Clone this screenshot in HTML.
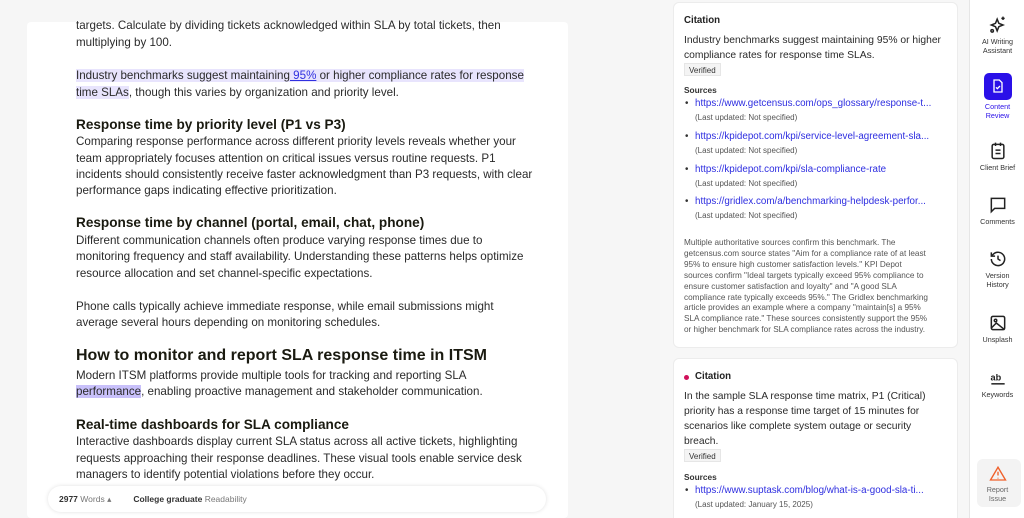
<!DOCTYPE html>
<html><head><meta charset="utf-8"><style>
*{margin:0;padding:0;box-sizing:border-box}
html,body{width:1024px;height:518px;overflow:hidden}
body{background:#f6f6f6;font-family:"Liberation Sans",Arial,sans-serif;position:relative;color:#222}
.ed{position:absolute;left:27px;top:22px;width:541px;height:496px;background:#fff;border-radius:4px}
.t{position:absolute;left:76px;font-size:11.6px;color:#2a2a2a;white-space:nowrap;line-height:17px}
.h3{position:absolute;left:76px;font-size:13.6px;font-weight:bold;color:#1a1a10;white-space:nowrap}
.h2{position:absolute;left:76px;font-size:16px;font-weight:bold;color:#1a1a10;white-space:nowrap}
.hl{background:#e8e4fd}
.hl2{background:#c8c0fa}
.bar{position:absolute;left:48px;top:486px;width:498px;height:26px;background:#fff;border-radius:13px;box-shadow:0 0 4px rgba(0,0,0,.12);font-size:8.5px;line-height:26px;padding-left:11px}
.rp{position:absolute;left:660px;top:0;width:309px;height:518px;background:#f7f7f7}
.card{position:absolute;left:673px;width:285px;background:#fff;border:1px solid #ececec;border-radius:6px}
.c{position:absolute;font-size:9.5px;color:#222;white-space:nowrap}
.ct{font-size:9.7px;font-weight:bold;color:#222}
.cb{font-size:10.3px;line-height:15px;color:#2a2a2a}
.ver{position:absolute;font-size:8px;color:#333;background:#f4f4f4;border:1px solid #e6e6e6;padding:1px 4px;height:13px;line-height:11px}
.src{position:absolute;font-size:8.3px;font-weight:bold;color:#333}
.lk{position:absolute;font-size:9.8px;color:#2d2de0;white-space:nowrap}
.lk:before{content:"•";color:#333;position:absolute;left:-10px}
.lu{position:absolute;font-size:8px;color:#555;white-space:nowrap}
.desc{position:absolute;left:684px;font-size:8.2px;line-height:10.9px;color:#555;white-space:nowrap}
.sb{position:absolute;left:969px;top:0;width:55px;height:518px;background:#fff;border-left:1px solid #e6e6e6}
.it{position:absolute;left:0;width:55px;text-align:center;font-size:7.2px;color:#333;line-height:8.5px}
.it svg{display:block;margin:0 auto 3px}
</style></head><body>
<div class="ed"></div>
<div class="t" style="top:17px">targets. Calculate by dividing tickets acknowledged within SLA by total tickets, then</div>
<div class="t" style="top:34px">multiplying by 100.</div>
<div class="t" style="top:67px"><span class="hl">Industry benchmarks suggest maintaining<span style="color:#3030e0;text-decoration:underline"> 95%</span> or higher compliance rates for response</span></div>
<div class="t" style="top:84px"><span class="hl">time SLAs</span>, though this varies by organization and priority level.</div>
<div class="h3" style="top:117px">Response time by priority level (P1 vs P3)</div>
<div class="t" style="top:133px">Comparing response performance across different priority levels reveals whether your</div>
<div class="t" style="top:150px">team appropriately focuses attention on critical issues versus routine requests. P1</div>
<div class="t" style="top:166px">incidents should consistently receive faster acknowledgment than P3 requests, with clear</div>
<div class="t" style="top:182px">performance gaps indicating effective prioritization.</div>
<div class="h3" style="top:215px">Response time by channel (portal, email, chat, phone)</div>
<div class="t" style="top:232px">Different communication channels often produce varying response times due to</div>
<div class="t" style="top:248px">monitoring frequency and staff availability. Understanding these patterns helps optimize</div>
<div class="t" style="top:265px">resource allocation and set channel-specific expectations.</div>
<div class="t" style="top:298px">Phone calls typically achieve immediate response, while email submissions might</div>
<div class="t" style="top:314px">average several hours depending on monitoring schedules.</div>
<div class="h2" style="top:347px">How to monitor and report SLA response time in ITSM</div>
<div class="t" style="top:367px">Modern ITSM platforms provide multiple tools for tracking and reporting SLA</div>
<div class="t" style="top:383px"><span class="hl2">performance</span>, enabling proactive management and stakeholder communication.</div>
<div class="h3" style="top:417px">Real-time dashboards for SLA compliance</div>
<div class="t" style="top:433px">Interactive dashboards display current SLA status across all active tickets, highlighting</div>
<div class="t" style="top:450px">requests approaching their response deadlines. These visual tools enable service desk</div>
<div class="t" style="top:466px">managers to identify potential violations before they occur.</div>
<div class="bar"><b style="color:#333">2977</b> <span style="color:#777">Words ▴</span><span style="margin-left:22px"><b style="color:#333">College graduate</b> <span style="color:#777">Readability</span></span></div>

<div class="rp"></div>
<div class="card" style="top:2px;height:346px"></div>
<div class="c ct" style="left:684px;top:15px">Citation</div>
<div class="c cb" style="left:684px;top:33px">Industry benchmarks suggest maintaining 95% or higher</div>
<div class="c cb" style="left:684px;top:48px">compliance rates for response time SLAs.</div>
<div class="ver" style="left:684px;top:63px">Verified</div>
<div class="src" style="left:684px;top:85px">Sources</div>
<div class="lk" style="left:695px;top:98px">https://www.getcensus.com/ops_glossary/response-t...</div>
<div class="lu" style="left:695px;top:113px">(Last updated: Not specified)</div>
<div class="lk" style="left:695px;top:131px">https://kpidepot.com/kpi/service-level-agreement-sla...</div>
<div class="lu" style="left:695px;top:146px">(Last updated: Not specified)</div>
<div class="lk" style="left:695px;top:164px">https://kpidepot.com/kpi/sla-compliance-rate</div>
<div class="lu" style="left:695px;top:179px">(Last updated: Not specified)</div>
<div class="lk" style="left:695px;top:196px">https://gridlex.com/a/benchmarking-helpdesk-perfor...</div>
<div class="lu" style="left:695px;top:211px">(Last updated: Not specified)</div>
<div class="desc" style="top:238px">Multiple authoritative sources confirm this benchmark. The<br>getcensus.com source states "Aim for a compliance rate of at least<br>95% to ensure high customer satisfaction levels." KPI Depot<br>sources confirm "Ideal targets typically exceed 95% compliance to<br>ensure customer satisfaction and loyalty" and "A good SLA<br>compliance rate typically exceeds 95%." The Gridlex benchmarking<br>article provides an example where a company "maintain[s] a 95%<br>SLA compliance rate." These sources consistently support the 95%<br>or higher benchmark for SLA compliance rates across the industry.</div>

<div class="card" style="top:358px;height:170px"></div>
<div style="position:absolute;left:684px;top:375px;width:5px;height:5px;border-radius:50%;background:#d0105a"></div>
<div class="c ct" style="left:695px;top:371px">Citation</div>
<div class="c cb" style="left:684px;top:389px">In the sample SLA response time matrix, P1 (Critical)</div>
<div class="c cb" style="left:684px;top:404px">priority has a response time target of 15 minutes for</div>
<div class="c cb" style="left:684px;top:419px">scenarios like complete system outage or security</div>
<div class="c cb" style="left:684px;top:434px">breach.</div>
<div class="ver" style="left:684px;top:449px">Verified</div>
<div class="src" style="left:684px;top:472px">Sources</div>
<div class="lk" style="left:695px;top:485px">https://www.suptask.com/blog/what-is-a-good-sla-ti...</div>
<div class="lu" style="left:695px;top:500px">(Last updated: January 15, 2025)</div>

<div class="sb">
<div class="it" style="top:15px"><svg width="20" height="20" viewBox="0 0 24 24" fill="none" stroke="#222" stroke-width="1.8"><path d="M11 5l2 5 5 2-5 2-2 5-2-5-5-2 5-2z"/><path d="M18 2v4M16 4h4"/><circle cx="5" cy="19" r="1.5"/></svg>AI Writing<br>Assistant</div>
<div class="it" style="top:73px"><div style="width:28px;height:27px;margin:0 auto 3px;background:#2a10e8;border-radius:5px;padding-top:5px"><svg width="16" height="16" viewBox="0 0 24 24" fill="none" stroke="#fff" stroke-width="2"><path d="M6 3h8l4 4v14H6z"/><path d="M9 14l2 2 4-4"/></svg></div><span style="color:#2a10e8">Content<br>Review</span></div>
<div class="it" style="top:141px"><svg width="20" height="20" viewBox="0 0 24 24" fill="none" stroke="#222" stroke-width="1.8"><rect x="5" y="4" width="14" height="17" rx="2"/><path d="M9 2v4M15 2v4M9 11h6M9 15h6"/></svg>Client Brief</div>
<div class="it" style="top:195px"><svg width="20" height="20" viewBox="0 0 24 24" fill="none" stroke="#222" stroke-width="1.8"><path d="M4 4h16v12H8l-4 4z"/></svg>Comments</div>
<div class="it" style="top:249px"><svg width="20" height="20" viewBox="0 0 24 24" fill="none" stroke="#222" stroke-width="1.8"><path d="M4 12a8 8 0 1 0 2.3-5.7L4 8.5M4 4v4.5h4.5"/><path d="M12 8v4l3 2"/></svg>Version<br>History</div>
<div class="it" style="top:313px"><svg width="20" height="20" viewBox="0 0 24 24" fill="none" stroke="#222" stroke-width="1.8"><rect x="4" y="4" width="16" height="16" rx="2"/><circle cx="9" cy="9" r="1.5"/><path d="M4 18l6-6 10 8"/></svg>Unsplash</div>
<div class="it" style="top:368px"><svg width="20" height="20" viewBox="0 0 24 24" fill="none" stroke="#222" stroke-width="1.8"><path d="M4 19h16"/><text x="3" y="15" font-size="11" font-family="Liberation Sans" font-weight="bold" fill="#222" stroke="none">ab</text></svg>Keywords</div>
<div style="position:absolute;left:7px;top:459px;width:44px;height:48px;background:#f3f3f3;border-radius:6px"></div>
<div class="it" style="top:465px;color:#666"><svg width="18" height="18" viewBox="0 0 24 24" fill="none" stroke="#f0602a" stroke-width="1.8"><path d="M12 3L2 20h20z"/><path d="M12 9v5M12 17v1"/></svg>Report<br>Issue</div>
</div>
</body></html>
